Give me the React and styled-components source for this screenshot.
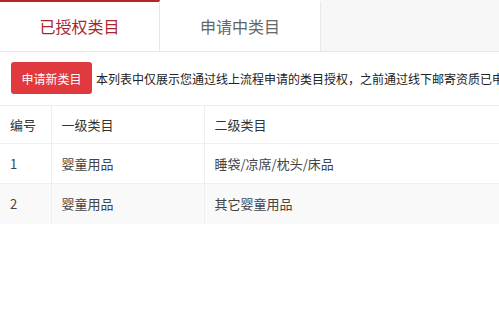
import React from "react";
import styled, { createGlobalStyle } from "styled-components";

const Global = createGlobalStyle`
  html, body { margin: 0; padding: 0; background: #fff; }
  body { font-family: "Noto Sans CJK SC", "Noto Sans", sans-serif; color: #333; overflow: hidden; }
`;

const Page = styled.div`
  width: 499px;
  height: 317px;
  overflow: hidden;
  background: #fff;
`;

const TabBar = styled.div`
  display: flex;
  height: 51px;
  background: #f7f7f7;
  border-bottom: 1px solid #e8e8e8;
`;

const Tab = styled.div`
  box-sizing: border-box;
  width: ${(p) => p.$w}px;
  height: 51px;
  background: #fff;
  border-right: 1px solid #e8e8e8;
  border-top: 2px solid ${(p) => (p.$active ? "#b3262c" : "#fff")};
  display: flex;
  align-items: center;
  justify-content: center;
  padding-bottom: 2px;
  font-size: 16px;
  color: ${(p) => (p.$active ? "#a9272c" : "#666")};
`;

const Toolbar = styled.div`
  display: flex;
  align-items: center;
  gap: 4px;
  height: 53px;
  padding-left: 11px;
  box-sizing: border-box;
  padding-bottom: 1px;
`;

const Button = styled.button`
  flex: none;
  width: 81px;
  height: 32px;
  border: none;
  border-radius: 3px;
  background: #e0393e;
  color: #fff;
  font-family: inherit;
  font-size: 12px;
  padding: 0;
  cursor: pointer;
`;

const Note = styled.span`
  font-size: 12px;
  color: #222;
  white-space: nowrap;
`;

const Table = styled.table`
  width: 100%;
  border-collapse: collapse;
  font-size: 13px;
`;

const Row = styled.tr`
  background: ${(p) => (p.$alt ? "#f9f9f9" : "#fff")};
`;

const Cell = styled.td`
  box-sizing: border-box;
  height: ${(p) => (p.$head ? 38 : 40)}px;
  width: ${(p) => (p.$w ? `${p.$w}px` : "auto")};
  padding: 0 10px;
  border-top: 1px solid #eee;
  border-right: 1px solid #eee;
  color: ${(p) => (p.$head ? "#333" : "#444")};
  font-weight: normal;
  text-align: left;
  vertical-align: middle;
  &:last-child { border-right: none; }
`;

const rows = [
  ["1", "婴童用品", "睡袋/凉席/枕头/床品"],
  ["2", "婴童用品", "其它婴童用品"],
];

export default function App() {
  return (
    <Page>
      <Global />
      <TabBar>
        <Tab $active $w={160}>已授权类目</Tab>
        <Tab $w={161}>申请中类目</Tab>
      </TabBar>
      <Toolbar>
        <Button>申请新类目</Button>
        <Note>本列表中仅展示您通过线上流程申请的类目授权，之前通过线下邮寄资质已申请的类目授权请联系小二查询</Note>
      </Toolbar>
      <Table>
        <tbody>
          <Row>
            <Cell as="th" $head $w={51}>编号</Cell>
            <Cell as="th" $head $w={153}>一级类目</Cell>
            <Cell as="th" $head>二级类目</Cell>
          </Row>
          {rows.map((r, i) => (
            <Row key={r[0]} $alt={i % 2 === 1}>
              <Cell $w={51}>{r[0]}</Cell>
              <Cell $w={153}>{r[1]}</Cell>
              <Cell>{r[2]}</Cell>
            </Row>
          ))}
        </tbody>
      </Table>
    </Page>
  );
}
